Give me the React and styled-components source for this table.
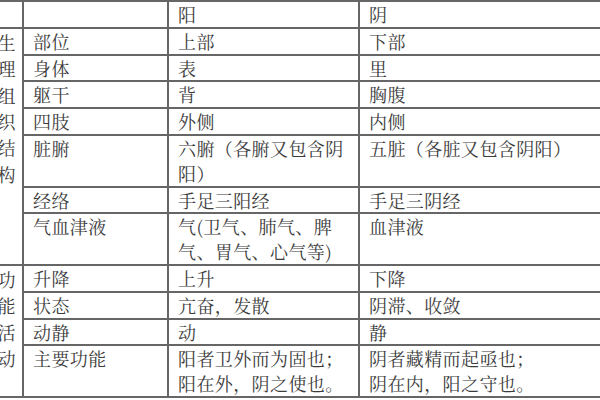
import React from "react";
import styled, { createGlobalStyle } from "styled-components";

const GlobalStyle = createGlobalStyle`
  html, body {
    margin: 0;
    padding: 0;
    background: #ffffff;
    overflow: hidden;
  }
`;

const Page = styled.div`
  width: 600px;
  height: 400px;
  overflow: hidden;
  background: #fff;
`;

const Table = styled.table`
  border-collapse: collapse;
  table-layout: fixed;
  margin-left: -30px;
  width: 900px;
  font-family: "Noto Serif CJK SC", "Noto Sans CJK SC", "Noto Sans CJK JP", serif;
  font-weight: 400;
  font-size: 18px;
  letter-spacing: 0.4px;
  color: #3c3c3c;

  td {
    border: 2px solid #666666;
    line-height: 24.8px;
    padding: 0 4px 0 9px;
    vertical-align: top;
    white-space: nowrap;
    overflow: hidden;
  }
`;

const SideCell = styled.td`
  && {
    text-align: right;
    padding: 0 6px 0 0;
  }
`;

const SideText = styled.div`
  display: flex;
  flex-direction: column;
  align-items: flex-end;
  line-height: 26.4px;
`;

const Col = styled.col`
  width: ${p => p.$w}px;
`;

const rows = [
  { label: "部位", yang: ["上部"], yin: ["下部"] },
  { label: "身体", yang: ["表"], yin: ["里"] },
  { label: "躯干", yang: ["背"], yin: ["胸腹"] },
  { label: "四肢", yang: ["外侧"], yin: ["内侧"] },
  { label: "脏腑", yang: ["六腑（各腑又包含阴", "阳）"], yin: ["五脏（各脏又包含阴阳）"] },
  { label: "经络", yang: ["手足三阳经"], yin: ["手足三阴经"] },
  { label: "气血津液", yang: ["气(卫气、肺气、脾", "气、胃气、心气等)"], yin: ["血津液"] },
  { label: "升降", yang: ["上升"], yin: ["下降"] },
  { label: "状态", yang: ["亢奋，发散"], yin: ["阴滞、收敛"] },
  { label: "动静", yang: ["动"], yin: ["静"] },
  { label: "主要功能", yang: ["阳者卫外而为固也；", "阳在外，阴之使也。"], yin: ["阴者藏精而起亟也；", "阴在内，阳之守也。"] },
];

const groups = [
  { start: 0, span: 7, title: "生理组织结构" },
  { start: 7, span: 4, title: "功能活动" },
];

function Lines({ lines }) {
  return lines.map((l, i) => (
    <React.Fragment key={i}>
      {i > 0 && <br />}
      {l}
    </React.Fragment>
  ));
}

export default function App() {
  return (
    <Page>
      <GlobalStyle />
      <Table>
        <colgroup>
          <Col $w={52} />
          <Col $w={145} />
          <Col $w={191} />
          <Col $w={512} />
        </colgroup>
        <tbody>
          <tr>
            <td></td>
            <td></td>
            <td>阳</td>
            <td>阴</td>
          </tr>
          {rows.map((r, i) => {
            const g = groups.find(g => g.start === i);
            return (
              <tr key={r.label}>
                {g && (
                  <SideCell rowSpan={g.span}>
                    <SideText>
                      {g.title.split("").map((c, j) => (
                        <span key={j}>{c}</span>
                      ))}
                    </SideText>
                  </SideCell>
                )}
                <td>{r.label}</td>
                <td>
                  <Lines lines={r.yang} />
                </td>
                <td>
                  <Lines lines={r.yin} />
                </td>
              </tr>
            );
          })}
        </tbody>
      </Table>
    </Page>
  );
}
